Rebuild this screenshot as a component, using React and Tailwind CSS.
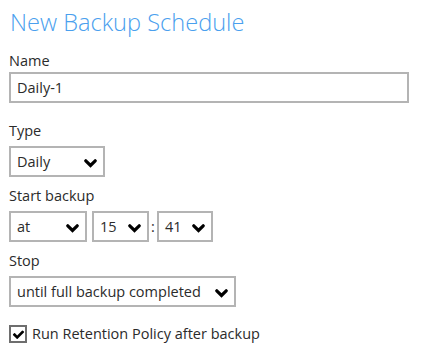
import React from "react";

function Chevron() {
  return (
    <svg viewBox="0 0 13 9" className="w-[13px] h-[9px] shrink-0 mt-[3px]">
      <polyline
        points="1.8,1.8 6.5,6.5 11.2,1.8"
        fill="none"
        stroke="#000"
        strokeWidth="3.2"
        strokeLinecap="round"
        strokeLinejoin="miter"
      />
    </svg>
  );
}

function Select({ value, width }) {
  return (
    <div
      className={`h-[31px] border-2 border-[#b4b4b4] bg-white flex items-center justify-between pl-[6px] pr-[6px] ${width}`}
    >
      <span className="text-[14.5px] text-[#2b2b2b]">{value}</span>
      <Chevron />
    </div>
  );
}

function Label({ children, gap }) {
  return (
    <div className={`text-[14.5px] leading-[20px] text-[#2b2b2b] ${gap}`}>{children}</div>
  );
}

export default function App() {
  return (
    <div className="w-[422px] h-[354px] bg-white pl-[9px] pt-[6px] font-['Open_Sans',sans-serif]">
      <h1 className="text-[23.6px] leading-[32px] font-light text-[#4aa0ee] pl-px">
        New Backup Schedule
      </h1>
      <div className="mt-[13px]">
        <Label gap="mb-[1px]">Name</Label>
        <div className="w-[400px] h-[31px] border-2 border-[#b4b4b4] flex items-center pl-[6px] text-[14.5px] text-[#2b2b2b]">
          Daily-1
        </div>
      </div>
      <div className="mt-[18px]">
        <Label gap="mb-[5px]">Type</Label>
        <Select value="Daily" width="w-[96px]" />
      </div>
      <div className="mt-[9px]">
        <Label gap="mb-[5px]">Start backup</Label>
        <div className="flex items-center">
          <Select value="at" width="w-[78px]" />
          <div className="w-[5px]" />
          <Select value="15" width="w-[57px]" />
          <span className="w-[8px] text-center text-[14.5px] text-[#2b2b2b]">:</span>
          <Select value="41" width="w-[56px]" />
        </div>
      </div>
      <div className="mt-[9px]">
        <Label gap="mb-[5px]">Stop</Label>
        <Select value="until full backup completed" width="w-[227px]" />
      </div>
      <div className="mt-[17px] flex items-center gap-[5px]">
        <div className="w-[18px] h-[18px] border-2 border-[#6e6e6e] flex items-center justify-center">
          <svg viewBox="0 0 1792 1792" className="w-[13px] h-[13px]" fill="#000">
            <path d="M1671 566q0 40-28 68l-724 724-136 136q-28 28-68 28t-68-28l-136-136-362-362q-28-28-28-68t28-68l136-136q28-28 68-28t68 28l294 295 656-657q28-28 68-28t68 28l136 136q28 28 28 68z" />
          </svg>
        </div>
        <span className="text-[14.5px] leading-[20px] text-[#2b2b2b]">Run Retention Policy after backup</span>
      </div>
    </div>
  );
}
